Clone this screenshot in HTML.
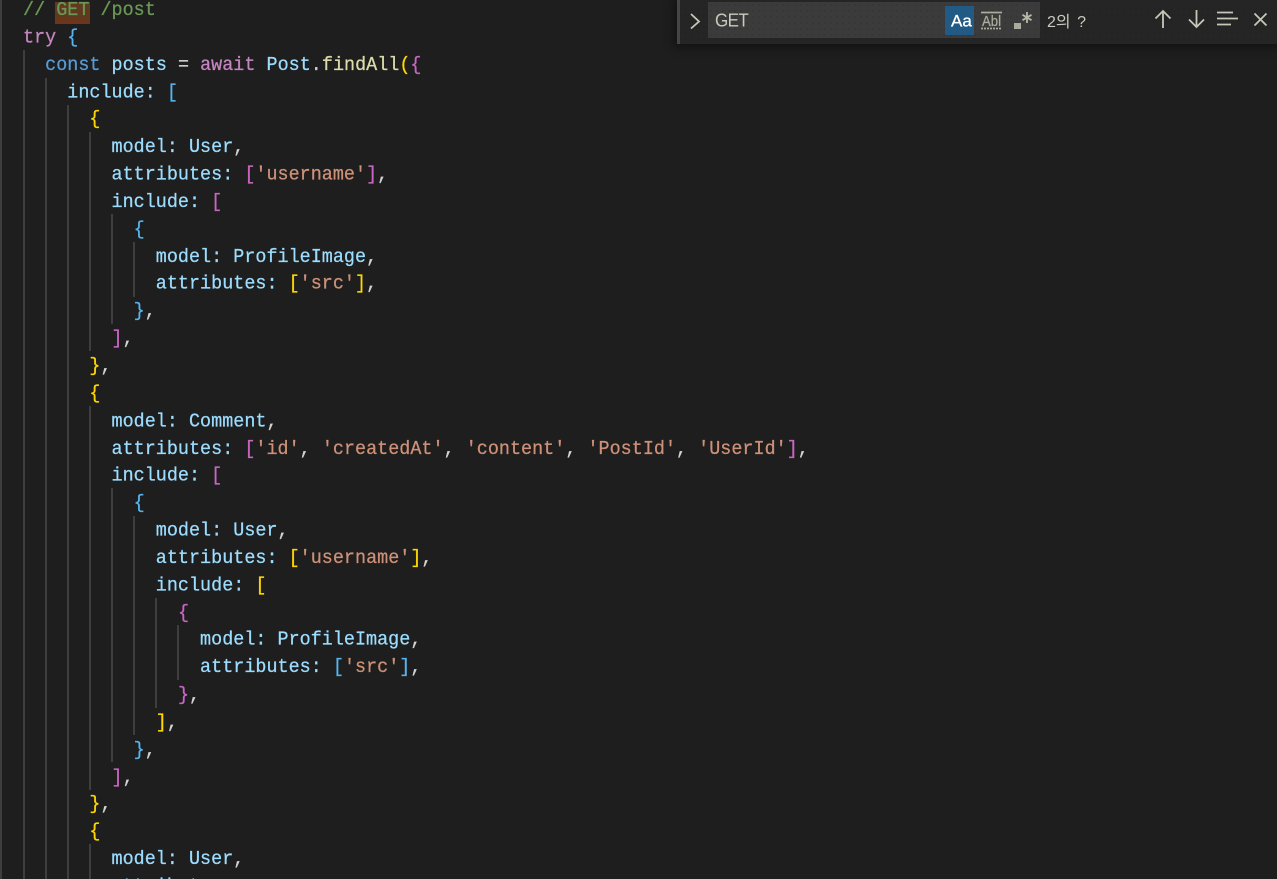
<!DOCTYPE html>
<html lang="ko"><head><meta charset="utf-8"><title>Editor</title>
<style>
html,body{margin:0;padding:0;background:#1e1e1e;width:1277px;height:879px;overflow:hidden}
#e{position:relative;width:1277px;height:879px;overflow:hidden;background:#1e1e1e}
pre{position:absolute;left:23px;top:-2.97px;margin:0;font:18.4px/25.84px "Liberation Mono",monospace;letter-spacing:.03px;color:#9cdcfe;white-space:pre;transform:scaleY(1.06);transform-origin:0 0;-webkit-text-stroke:.25px}
.g{position:absolute;width:2px;background:#3e3e3e}
.c{color:#6a9955}.k{color:#569cd6}.m{color:#c586c0}.f{color:#dcdcaa}.s{color:#ce9178}.w{color:#d4d4d4}
.y{color:#ffd700}.p{color:#c966c4}.b{color:#55b5f0}
#hl{position:absolute;left:55px;top:2px;width:35px;height:22px;background:linear-gradient(#5f3a20 60%,#70341a)}
#w{position:absolute;left:677px;top:0;width:600px;height:44px;background:#252526 radial-gradient(rgba(0,0,0,.22) .6px,transparent .8px) 0 0/6px 6px;box-shadow:0 0 10px 3px rgba(0,0,0,.45)}
#wb{position:absolute;left:0;top:0;width:3px;height:44px;background:#454545}
#i{position:absolute;left:31px;top:2px;width:332px;height:36px;background:#3b3b3b radial-gradient(rgba(0,0,0,.25) .6px,transparent .8px) 0 0/6px 6px}
#t{position:absolute;left:38px;top:10px;font:17px/21px "Liberation Sans",sans-serif;letter-spacing:-.6px;color:#c8cbbd;transform:scaleY(1.1);transform-origin:0 50%}
#aa{position:absolute;left:268px;top:6px;width:29px;height:29px;background:#215a85}
#n{position:absolute;left:370px;top:12px;font:16px/21px "Liberation Sans","Noto Sans CJK KR",sans-serif;word-spacing:2px;color:#c8cbbd;white-space:pre}
svg{position:absolute;left:0;top:0}
</style></head><body><div id="e">
<div class="g" style="left:0;top:0;height:879px"></div>
<div class="g" style="left:23px;top:50px;height:829px"></div>
<div class="g" style="left:45px;top:78px;height:801px"></div>
<div class="g" style="left:67px;top:105px;height:774px"></div>
<div class="g" style="left:89px;top:132px;height:219px"></div>
<div class="g" style="left:89px;top:406px;height:384px"></div>
<div class="g" style="left:89px;top:844px;height:35px"></div>
<div class="g" style="left:111px;top:214px;height:110px"></div>
<div class="g" style="left:111px;top:488px;height:274px"></div>
<div class="g" style="left:133px;top:242px;height:55px"></div>
<div class="g" style="left:133px;top:516px;height:219px"></div>
<div class="g" style="left:155px;top:598px;height:110px"></div>
<div class="g" style="left:177px;top:625px;height:55px"></div>
<div id="hl"></div>
<pre><span class="c">// GET /post</span>
<span class="m">try</span> <span class="b">{</span>
  <span class="k">const</span> posts <span class="w">=</span> <span class="m">await</span> Post<span class="w">.</span><span class="f">findAll</span><span class="y">(</span><span class="p">{</span>
    include: <span class="b">[</span>
      <span class="y">{</span>
        model: User<span class="w">,</span>
        attributes: <span class="p">[</span><span class="s">'username'</span><span class="p">]</span><span class="w">,</span>
        include: <span class="p">[</span>
          <span class="b">{</span>
            model: ProfileImage<span class="w">,</span>
            attributes: <span class="y">[</span><span class="s">'src'</span><span class="y">]</span><span class="w">,</span>
          <span class="b">}</span><span class="w">,</span>
        <span class="p">]</span><span class="w">,</span>
      <span class="y">}</span><span class="w">,</span>
      <span class="y">{</span>
        model: Comment<span class="w">,</span>
        attributes: <span class="p">[</span><span class="s">'id'</span><span class="w">,</span> <span class="s">'createdAt'</span><span class="w">,</span> <span class="s">'content'</span><span class="w">,</span> <span class="s">'PostId'</span><span class="w">,</span> <span class="s">'UserId'</span><span class="p">]</span><span class="w">,</span>
        include: <span class="p">[</span>
          <span class="b">{</span>
            model: User<span class="w">,</span>
            attributes: <span class="y">[</span><span class="s">'username'</span><span class="y">]</span><span class="w">,</span>
            include: <span class="y">[</span>
              <span class="p">{</span>
                model: ProfileImage<span class="w">,</span>
                attributes: <span class="b">[</span><span class="s">'src'</span><span class="b">]</span><span class="w">,</span>
              <span class="p">}</span><span class="w">,</span>
            <span class="y">]</span><span class="w">,</span>
          <span class="b">}</span><span class="w">,</span>
        <span class="p">]</span><span class="w">,</span>
      <span class="y">}</span><span class="w">,</span>
      <span class="y">{</span>
        model: User<span class="w">,</span>
        attributes</pre>
<div id="w">
<div id="wb"></div>
<div id="i"></div>
<div id="t">GET</div>
<div id="aa"></div>
<div id="n">2의 ?</div>
<svg width="600" height="44" fill="none" stroke="#c5c8b8" stroke-width="1.8">
<path d="M14 14l8 7.500-8 7"/>
<text x="274" y="26.500" font-family="Liberation Sans,sans-serif" font-size="17" fill="#fff" stroke="#fff" stroke-width=".3">Aa</text>
<path d="M304 12.500h21" stroke="#a8ac9c"/>
<text x="305" y="26" font-family="Liberation Sans,sans-serif" font-size="15" fill="#a8ac9c" stroke="#a8ac9c" stroke-width=".3" textLength="19" lengthAdjust="spacingAndGlyphs">Abl</text>
<path d="M304 28.500h21" stroke="#a8ac9c" stroke-width="1.8" stroke-dasharray="2 1"/>
<rect x="337" y="23" width="7" height="6" fill="#a8ac9c" stroke="none"/>
<path d="M350 12v11M345.500 14.800l9 5.400M354.500 14.800l-9 5.400" stroke="#b4b8a8" stroke-width="1.8"/>
<path d="M486 28V11M478.500 18.500L486 11l7.500 7.500"/>
<path d="M519.500 10v17M512 19.500l7.500 7.500 7.500-7.500"/>
<path d="M540 12.500h16M540 18.500h21M540 24.500h14"/>
<path d="M577.500 13.500l12 12M589.500 13.500l-12 12"/>
</svg>
</div>
</div></body></html>
